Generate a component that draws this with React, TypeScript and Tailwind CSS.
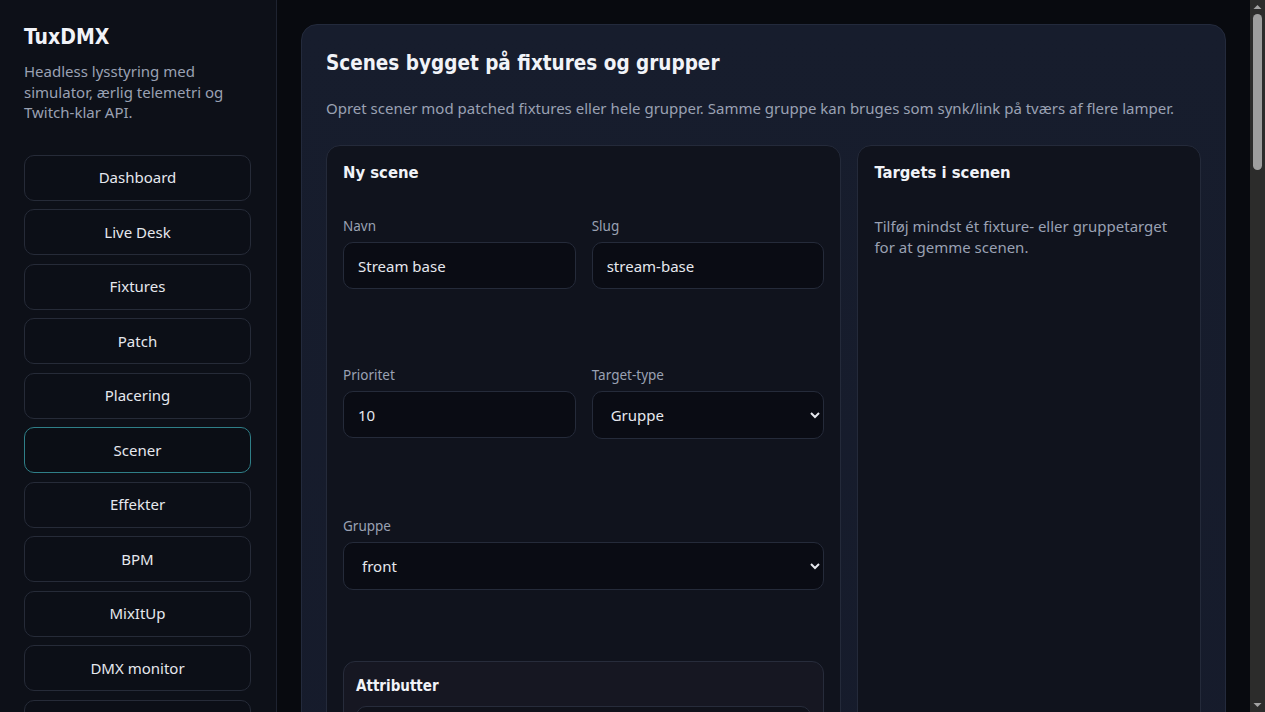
import React from "react";

const nav = [
  "Dashboard",
  "Live Desk",
  "Fixtures",
  "Patch",
  "Placering",
  "Scener",
  "Effekter",
  "BPM",
  "MixItUp",
  "DMX monitor",
  "Indstillinger",
];

const body = { fontFamily: '"Noto Sans", "Open Sans", sans-serif' };
const head = { fontFamily: '"DejaVu Sans Condensed", "DejaVu Sans", sans-serif' };

function Field({ label, children }: { label: string; children: React.ReactNode }) {
  return (
    <label className="flex flex-col">
      <span className="text-[13.5px] leading-[18px] text-[#9aa1b3] mb-[7px]">{label}</span>
      {children}
    </label>
  );
}

const inputCls =
  "h-[47px] w-full rounded-[10px] border border-[#252b3a] bg-[#0a0c14] px-[14px] text-[15px] text-[#e6e8ee] outline-none";
const selectCls =
  "h-[48px] w-full rounded-[10px] border border-[#252b3a] bg-[#0a0c14] pl-[14px] pr-2 text-[15px] text-[#e6e8ee] outline-none";

function ScrollRail() {
  return (
    <div className="flex h-screen w-[15px] shrink-0 flex-col items-center bg-[#2c2c2b]">
      <svg width="15" height="14" viewBox="0 0 15 14" className="shrink-0">
        <path d="M3.5 9 L7.5 5 L11.5 9 Z" fill="#a3a3a3" />
      </svg>
      <div className="h-[156px] w-[9px] shrink-0 rounded-full bg-[#9e9e9e]" />
      <div className="flex-1" />
      <svg width="15" height="14" viewBox="0 0 15 14" className="shrink-0">
        <path d="M3.5 5 L7.5 9 L11.5 5 Z" fill="#a3a3a3" />
      </svg>
    </div>
  );
}

export default function App() {
  return (
    <div className="flex h-screen overflow-hidden bg-[#080a0f] text-[#e6e8ee]" style={body}>
      <aside className="h-screen w-[277px] shrink-0 overflow-hidden border-r border-[#1e2330] bg-[#0d1018] pl-6 pr-[25px] pt-[23px]">
        <h1 className="text-[21px] font-bold leading-[28px] text-[#f1f3f8]" style={head}>
          TuxDMX
        </h1>
        <p className="mt-[10px] text-[15px] leading-[20.5px] text-[#9aa1b3]">
          Headless lysstyring med simulator, ærlig telemetri og Twitch-klar API.
        </p>
        <nav className="mt-[32px] flex flex-col gap-[8.5px]">
          {nav.map((n) => (
            <button
              key={n}
              className={
                n === "Scener"
                  ? "h-[46px] w-full shrink-0 rounded-[10px] border border-[#2f7f88] bg-[#0b0e15] text-[15px] text-[#e6e8ee]"
                  : "h-[46px] w-full shrink-0 rounded-[10px] border border-[#262b38] bg-[#0c0f17] text-[15px] text-[#e6e8ee]"
              }
            >
              {n}
            </button>
          ))}
        </nav>
      </aside>

      <main className="h-screen flex-1 overflow-hidden p-6">
        <section className="rounded-[16px] border border-[#232a3c] bg-gradient-to-b from-[#171d2d] to-[#151a2a] px-6 pt-[24px] pb-6">
          <h2 className="text-[20.5px] font-bold leading-[28px] text-[#f1f3f8]" style={head}>
            Scenes bygget på fixtures og grupper
          </h2>
          <p className="mt-[21px] text-[15px] leading-[20px] text-[#9aa1b3]">
            Opret scener mod patched fixtures eller hele grupper. Samme gruppe kan bruges som synk/link på tværs af flere lamper.
          </p>

          <div className="mt-[27px] grid grid-cols-[3fr_2fr] gap-4">
            <div className="rounded-[14px] border border-[#242a3a] bg-[#10131d] px-4 pt-4 pb-6">
              <h3 className="text-[16.5px] font-bold leading-[22px] text-[#f1f3f8]" style={head}>
                Ny scene
              </h3>
              <div className="mt-[33px] grid grid-cols-2 gap-x-4">
                <Field label="Navn">
                  <input className={inputCls} defaultValue="Stream base" />
                </Field>
                <Field label="Slug">
                  <input className={inputCls} defaultValue="stream-base" />
                </Field>
              </div>
              <div className="mt-[77px] grid grid-cols-2 gap-x-4">
                <Field label="Prioritet">
                  <input className={inputCls} defaultValue="10" />
                </Field>
                <Field label="Target-type">
                  <select className={selectCls} defaultValue="group">
                    <option value="fixture">Fixture</option>
                    <option value="group">Gruppe</option>
                  </select>
                </Field>
              </div>
              <div className="mt-[78px]">
                <Field label="Gruppe">
                  <select className={selectCls} defaultValue="front">
                    <option value="front">front</option>
                    <option value="back">back</option>
                  </select>
                </Field>
              </div>
              <div className="mt-[71px] rounded-[12px] border border-[#272c3b] bg-[#161722] px-3 pt-[14px] pb-4">
                <h4 className="text-[15px] font-bold leading-[20px] text-[#f1f3f8]" style={head}>
                  Attributter
                </h4>
                <div className="mt-[10px] flex flex-col gap-3">
                  {["Dimmer", "Rød", "Grøn", "Blå", "Hvid", "Strobe"].map((a) => (
                    <div key={a} className="rounded-[10px] border border-[#272c3b] bg-[#10121b] p-4">
                      <div className="flex items-center justify-between text-[14px] text-[#c9cdd8]">
                        <span>{a}</span>
                        <span className="text-[#9aa1b3]">0</span>
                      </div>
                      <div className="mt-3 h-[6px] rounded-full bg-[#232838]" />
                    </div>
                  ))}
                </div>
              </div>
            </div>

            <div className="rounded-[14px] border border-[#242a3a] bg-[#10131d] px-4 pt-4">
              <h3 className="text-[16.5px] font-bold leading-[22px] text-[#f1f3f8]" style={head}>
                Targets i scenen
              </h3>
              <p className="mt-[32px] text-[15px] leading-[21px] text-[#9aa1b3]">
                Tilføj mindst ét fixture- eller gruppetarget for at gemme scenen.
              </p>
            </div>
          </div>
        </section>
      </main>

      <ScrollRail />
    </div>
  );
}
